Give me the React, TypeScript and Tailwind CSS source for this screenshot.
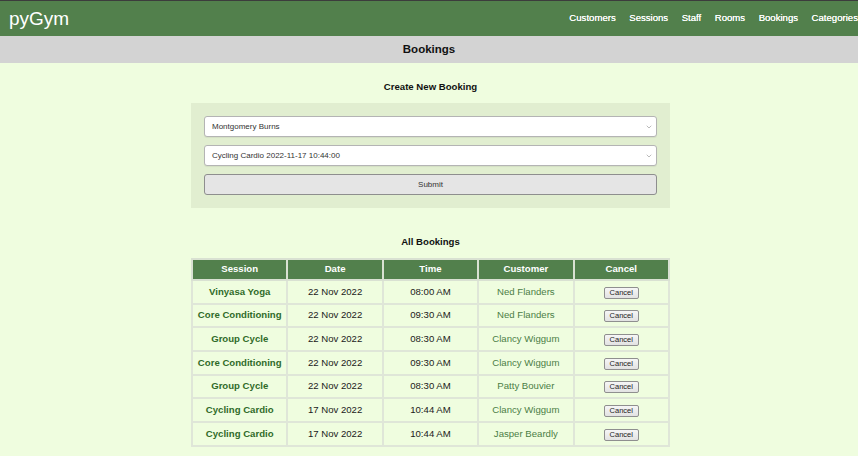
import { ChevronDown } from 'lucide-react';

const NAV = ['Customers', 'Sessions', 'Staff', 'Rooms', 'Bookings', 'Categories'];

const BOOKINGS = [
  { session: 'Vinyasa Yoga', date: '22 Nov 2022', time: '08:00 AM', customer: 'Ned Flanders' },
  { session: 'Core Conditioning', date: '22 Nov 2022', time: '09:30 AM', customer: 'Ned Flanders' },
  { session: 'Group Cycle', date: '22 Nov 2022', time: '08:30 AM', customer: 'Clancy Wiggum' },
  { session: 'Core Conditioning', date: '22 Nov 2022', time: '09:30 AM', customer: 'Clancy Wiggum' },
  { session: 'Group Cycle', date: '22 Nov 2022', time: '08:30 AM', customer: 'Patty Bouvier' },
  { session: 'Cycling Cardio', date: '17 Nov 2022', time: '10:44 AM', customer: 'Clancy Wiggum' },
  { session: 'Cycling Cardio', date: '17 Nov 2022', time: '10:44 AM', customer: 'Jasper Beardly' },
];

function FakeSelect({ value }: { value: string }) {
  return (
    <div className="flex h-[21px] items-center justify-between rounded-[3px] border border-[#b4b4b4] bg-white pl-[7px] pr-[3px] shadow-[0_1px_1px_rgba(0,0,0,0.06)]">
      <span className="text-[8px] text-[#333]">{value}</span>
      <ChevronDown size={8} strokeWidth={1.5} className="text-[#777]" />
    </div>
  );
}

export default function App() {
  return (
    <div className="min-h-[456px] bg-[#effddf] font-['Liberation_Sans',Arial,sans-serif]">
      <nav className="flex h-[36px] items-center justify-between border-t border-[#3c3c3c] bg-[#52804c] pl-[9px]">
        <span className="text-[19px] leading-none text-white">pyGym</span>
        <ul className="flex gap-[13.5px] pb-[1px]">
          {NAV.map((n) => (
            <li key={n} className="text-[9.6px] font-medium text-white [text-shadow:0_0_0.4px_#fff]">
              {n}
            </li>
          ))}
        </ul>
      </nav>

      <div className="flex h-[27px] items-center justify-center bg-[#d3d3d3]">
        <h1 className="text-[11.5px] font-bold text-[#111]">Bookings</h1>
      </div>

      <main className="ml-[191px] w-[479px] pt-[18px]">
        <h2 className="text-center text-[9.6px] font-bold leading-[12px] text-[#111]">Create New Booking</h2>

        <form className="mt-[10px] flex flex-col gap-[8px] bg-[#e1eed0] px-[13px] pb-[13px] pt-[13px]">
          <FakeSelect value="Montgomery Burns" />
          <FakeSelect value="Cycling Cardio 2022-11-17 10:44:00" />
          <button
            type="button"
            className="h-[21px] rounded-[3px] border border-[#8e8e8e] bg-[#e5e5e5] text-[8px] text-[#333]"
          >
            Submit
          </button>
        </form>

        <h2 className="mt-[28px] text-center text-[9.6px] font-bold leading-[12px] text-[#111]">All Bookings</h2>

        <table className="mt-[10px] w-full border-collapse text-center text-[9.6px]">
          <thead>
            <tr className="bg-[#52804c] text-white">
              {['Session', 'Date', 'Time', 'Customer', 'Cancel'].map((h) => (
                <th key={h} className="h-[21px] w-1/5 border-2 border-[#d9e1d2] p-0 font-bold">
                  {h}
                </th>
              ))}
            </tr>
          </thead>
          <tbody>
            {BOOKINGS.map((b, i) => (
              <tr key={i}>
                <td className="h-[23.7px] border-2 border-[#dfe6d8] p-0 font-bold text-[#2f6b29]">{b.session}</td>
                <td className="border-2 border-[#dfe6d8] p-0 text-[#1a1a1a]">{b.date}</td>
                <td className="border-2 border-[#dfe6d8] p-0 text-[#1a1a1a]">{b.time}</td>
                <td className="border-2 border-[#dfe6d8] p-0 text-[#4c7d46]">{b.customer}</td>
                <td className="border-2 border-[#dfe6d8] p-0">
                  <button
                    type="button"
                    className="h-[12px] w-[35px] rounded-[2px] border border-[#8f8f8f] bg-[linear-gradient(#f6f6f6,#e2e2e2)] text-[7.5px] leading-[10px] text-[#222]"
                  >
                    Cancel
                  </button>
                </td>
              </tr>
            ))}
          </tbody>
        </table>
      </main>
    </div>
  );
}
